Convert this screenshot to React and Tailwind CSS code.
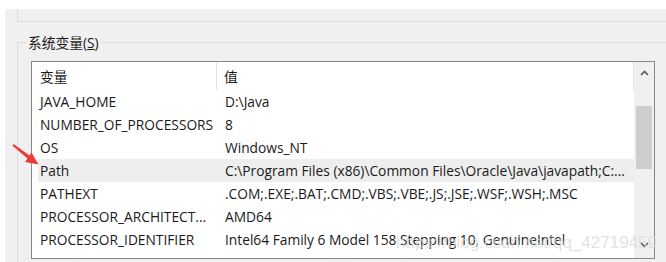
import React from 'react';

const rows = [
  ['JAVA_HOME', 'D:\\Java'],
  ['NUMBER_OF_PROCESSORS', '8'],
  ['OS', 'Windows_NT'],
  ['Path', 'C:\\Program Files (x86)\\Common Files\\Oracle\\Java\\javapath;C:...'],
  ['PATHEXT', '.COM;.EXE;.BAT;.CMD;.VBS;.VBE;.JS;.JSE;.WSF;.WSH;.MSC'],
  ['PROCESSOR_ARCHITECT...', 'AMD64'],
  ['PROCESSOR_IDENTIFIER', 'Intel64 Family 6 Model 158 Stepping 10, GenuineIntel'],
];

const font = { fontFamily: '"Open Sans", "Noto Sans CJK SC", sans-serif' };

const App = () => {
  return (
    <div className="relative w-[666px] h-[262px] bg-white overflow-hidden text-[#1a1a1a]" style={font}>
      {/* dialog body */}
      <div className="ml-[5px] mt-[9px] h-[253px] bg-[#f0f0f0]">
        {/* upper group (user variables), only its bottom edge shows */}
        <div className="ml-[12px] h-[13px] border-l border-b border-[#dcdcdc]" />

        {/* system variables group */}
        <div className="relative ml-[12px] mt-[20px] h-[220px] border-l border-t border-[#dcdcdc]">
          <div className="absolute -top-[10px] left-[8px] bg-[#f0f0f0] px-[2px] text-[13.75px] leading-[19px]">
            系统变量(<span className="underline">S</span>)
          </div>

          {/* list view */}
          <div className="ml-[13px] mt-[18px] w-[624px] h-[198px] border border-[#828790] bg-white flex">
            <div className="w-[602px] flex flex-col">
              {/* header */}
              <div className="h-[28px] flex items-center text-[13.75px]">
                <div className="w-[185px] h-full flex items-center pl-[8px] pt-[2px] border-r border-[#e5e5e5]">变量</div>
                <div className="flex-1 h-full flex items-center pl-[7px] pt-[2px] border-r border-[#e5e5e5]">值</div>
              </div>
              {rows.map(([name, value]) => (
                <div
                  key={name}
                  className={`ml-[6px] h-[23px] flex items-center pt-[1px] text-[13.75px] whitespace-nowrap ${name === 'Path' ? 'bg-[#eeeeee]' : ''}`}
                >
                  <div className="w-[179px] pl-[2px]">{name}</div>
                  <div className="pl-[8px]">{value}</div>
                </div>
              ))}
            </div>

            {/* scrollbar */}
            <div className="w-[20px] bg-[#f0f0f0] flex flex-col items-center">
              <svg className="mt-[8px]" width="9" height="6" viewBox="0 0 9 6">
                <path d="M1 5 L4.5 1.5 L8 5" fill="none" stroke="#555" strokeWidth="1.6" />
              </svg>
              <div className="mt-[30px] w-[16px] h-[63px] bg-[#cdcdcd]" />
              <div className="flex-1" />
              <svg className="mb-[10px]" width="9" height="6" viewBox="0 0 9 6">
                <path d="M1 1 L4.5 4.5 L8 1" fill="none" stroke="#555" strokeWidth="1.6" />
              </svg>
            </div>
          </div>
        </div>
      </div>

      {/* red annotation arrow */}
      <svg className="absolute left-0 top-0 pointer-events-none" width="50" height="180" viewBox="0 0 50 180">
        <path d="M13.5 144 L29.5 155.5 L31.5 152.5 L38.5 164.5 L25 162 L27.5 158.5 L12.5 145.8 Z" fill="#ec3b34" />
      </svg>

      {/* watermark */}
      <div
        className="absolute top-[230px] right-[9px] text-[17px] text-[#d8d8d8] opacity-70 pointer-events-none"
        style={{ fontFamily: '"Liberation Sans", sans-serif' }}
      >
        https://blog.csdn.net/qq_42719459
      </div>
    </div>
  );
};

export default App;
